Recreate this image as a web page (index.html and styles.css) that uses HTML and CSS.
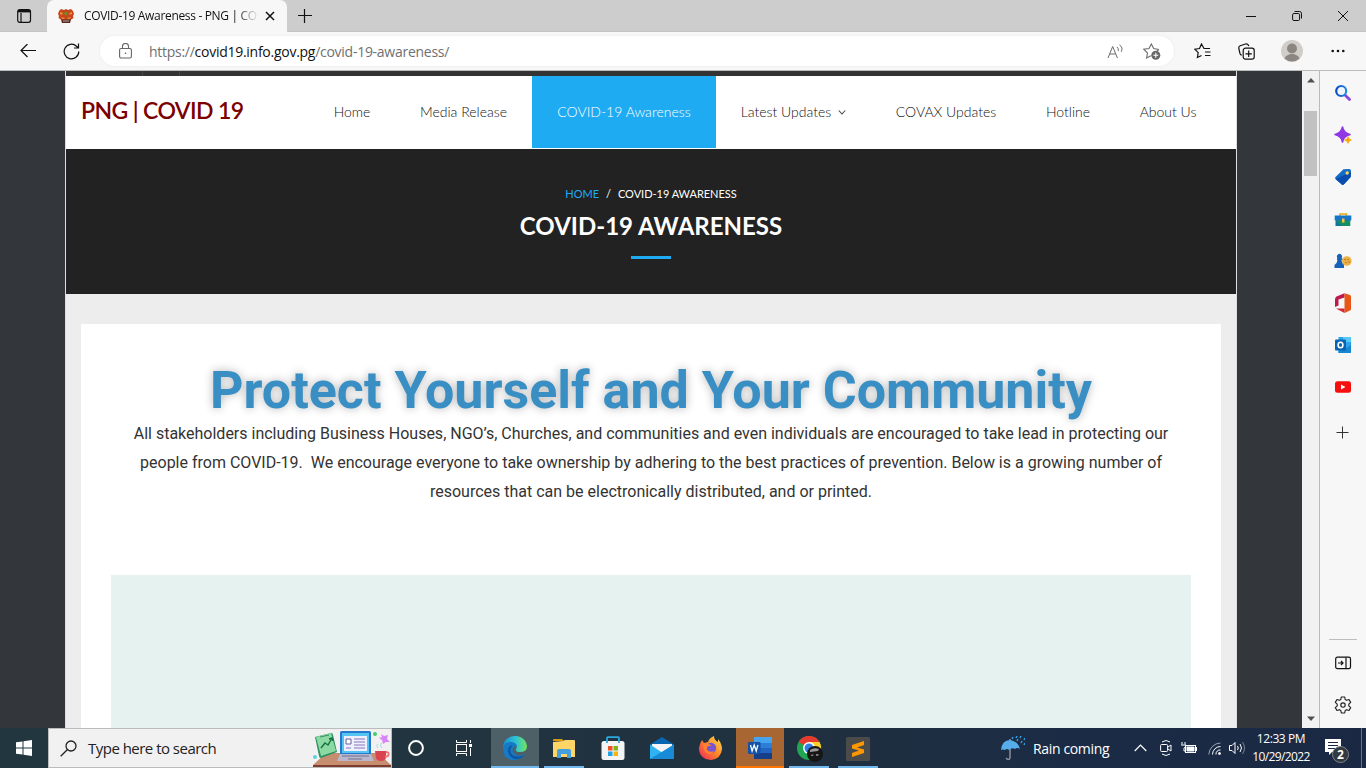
FILE: index.html
```html
<!DOCTYPE html>
<html lang="en">
<head>
<meta charset="utf-8">
<title>COVID-19 Awareness - PNG | COVID 19</title>
<link rel="stylesheet" href="styles.css">
</head>
<body>
<div class="desktop">
  <header class="tabbar">
    <svg class="tab-actions" width="16" height="16" viewBox="0 0 16 16" fill="none" stroke="#111"><rect x="1.700" y="1.700" width="12.800" height="12.600" rx="2" stroke-width="1.200"/><path d="M2 3.200h12" stroke-width="2.400"/><path d="M5 5v9" stroke-width="1.200"/></svg>
    <div class="tab">
      <svg width="18" height="16" viewBox="0 0 18 16"><path d="M2 3l2-2 3 1 2-1 2 1 3-1 2 2 1 3-1 2 .5 2-3 2H4.500l-3-2L2 8 1 6z" fill="#c5471b"/><path d="M3 4l3 1-1 2-2-1zm12 0-3 1 1 2 2-1zM4 9l4 1-2 1.500zm10 0-4 1 2 1.500z" fill="#ed8b42"/><path d="M4 11.500h10L13 15H5z" fill="#5b2a1c"/><circle cx="9" cy="5.500" r="1.800" fill="#6c8b2b"/><path d="M6 13h6" stroke="#aaa"/></svg>
      <span class="tab-title">COVID-19 Awareness - PNG | CO</span>
      <svg class="tab-close" width="10" height="10" viewBox="0 0 10 10" stroke="#111" stroke-width="1.500"><path d="M1 1l8 8M9 1l-8 8"/></svg>
    </div>
    <svg class="new-tab" width="14" height="14" viewBox="0 0 14 14" stroke="#111" stroke-width="1.200"><path d="M6.500 0v14M0 6.500h14"/></svg>
    <div class="window-buttons">
      <svg width="10" height="10" viewBox="0 0 10 10" stroke="#111" fill="none"><path d="M0 5.500h10"/></svg>
      <svg width="10" height="10" viewBox="0 0 10 10" stroke="#111" fill="none"><rect x=".6" y="2.500" width="7" height="7" rx="1.300"/><path d="M2.500 .5h5a2 2 0 0 1 2 2v5"/></svg>
      <svg width="10" height="10" viewBox="0 0 10 10" stroke="#111" fill="none"><path d="M0 0l10 10M10 0L0 10"/></svg>
    </div>
  </header>

  <div class="toolbar">
    <svg class="back" width="16" height="14" viewBox="0 0 16 14" fill="none" stroke="#111" stroke-width="1.200"><path d="M16 6.500H1M7.500 0L1 6.500 7.500 13"/></svg>
    <svg class="reload" width="17" height="17" viewBox="0 0 17 17" fill="none" stroke="#111" stroke-width="1.200"><path d="M15.800 8.500A7.300 7.300 0 1 1 13.500 3.200L15.500 5M15.500 .5V5H11"/></svg>
    <div class="address">
      <svg class="lock" width="13" height="16" viewBox="0 0 13 16" fill="none" stroke="#666" stroke-width="1.100"><rect x=".6" y="5.500" width="11.800" height="9.500" rx="1.500"/><path d="M3.500 5.500v-2a3 3 0 0 1 6 0v2"/><circle cx="6.500" cy="10.300" r=".8" fill="#555" stroke="none"/></svg>
      <span class="url">https://<b>covid19.info.gov.pg</b>/covid-19-awareness/</span>
      <svg class="read" width="17" height="15" viewBox="0 0 17 15" fill="none" stroke="#6b6b6b"><path d="M1 14L5.700 2.500 10.400 14M2.700 10h6M10 3q2 1.500 1.200 4M12.500 .8q4 3 1.700 7"/></svg>
      <svg class="addfav" width="18" height="17" viewBox="0 0 18 17" fill="none" stroke="#6b6b6b" stroke-width="1.100"><path d="M16 6.500L10.700 5.500 8.300 1 6 5.500.8 6.300 4.500 10l-.9 5 4.200-2.200M16 6.500L14 8"/><circle cx="12.800" cy="12.200" r="4.500" fill="#666" stroke="none"/><path d="M12.800 9.700v5M10.300 12.200h5" stroke="#fff"/></svg>
    </div>
    <svg class="favorites" width="17" height="16" viewBox="0 0 17 16" fill="none" stroke="#111" stroke-width="1.200"><path d="M16 5.500h-6L7.500 1 5.500 5.500.8 6.200l3.400 3.400-.8 4.900L7.500 12.500M11 9h5.500M11 12.500h5.500"/></svg>
    <svg class="collections" width="17" height="17" viewBox="0 0 17 17" fill="none" stroke="#111" stroke-width="1.200"><path d="M3.800 12.200Q2.500 12 2 10.500L.8 5.500Q.5 3.500 2.200 2.800L7.500 1Q10 .3 10.800 3.200"/><rect x="5.200" y="5.200" width="11" height="11" rx="2.200"/><path d="M10.700 7.600v6.400M7.500 10.800h6.400"/></svg>
    <svg class="profile" width="22" height="22" viewBox="0 0 22 22"><circle cx="11" cy="11" r="11" fill="#d1cec9"/><circle cx="11" cy="8.500" r="5" fill="#8c8682"/><path d="M3.500 18.500q2-4.500 7.500-4.500t7.500 4.500A11 11 0 0 1 3.500 18.500z" fill="#8c8682"/></svg>
    <svg class="more" width="14" height="4" viewBox="0 0 14 4" fill="#111"><circle cx="1.700" cy="2" r="1.300"/><circle cx="7" cy="2" r="1.300"/><circle cx="12.300" cy="2" r="1.300"/></svg>
  </div>

  <div class="content">
    <main class="viewport">
      <div class="site">
        <div class="topstrip"><i></i><i></i></div>
        <nav class="nav">
          <a class="brand">PNG | COVID 19</a>
          <a class="item home">Home</a>
          <a class="item media">Media Release</a>
          <a class="item active">COVID-19 Awareness</a>
          <a class="item latest">Latest Updates <svg width="8" height="6" viewBox="0 0 8 6" fill="none" stroke="#444" stroke-width="1.100"><path d="M.8 1.500L4 5 7.200 1.500"/></svg></a>
          <a class="item covax">COVAX Updates</a>
          <a class="item hotline">Hotline</a>
          <a class="item about">About Us</a>
        </nav>
        <section class="hero">
          <div class="crumbs"><a>HOME</a><span>/</span>COVID-19 AWARENESS</div>
          <h1>COVID-19 AWARENESS</h1>
          <div class="rule"></div>
        </section>
        <section class="body">
          <article class="card">
            <h2>Protect Yourself and Your Community</h2>
            <p>All stakeholders including Business Houses, NGO’s, Churches, and communities and even individuals are encouraged to take lead in protecting our<br>people from COVID-19.&nbsp; We encourage everyone to take ownership by adhering to the best practices of prevention. Below is a growing number of<br>resources that can be electronically distributed, and or printed.</p>
            <div class="panel"></div>
          </article>
        </section>
      </div>
    </main>
    <div class="scrollbar">
      <svg width="8" height="5" viewBox="0 0 8 5"><path d="M4 0l4 4.500H0z" fill="#505050"/></svg>
      <div class="thumb"></div>
      <svg class="down" width="8" height="5" viewBox="0 0 8 5"><path d="M0 .5h8L4 5z" fill="#505050"/></svg>
    </div>
    <aside class="sidebar">
      <svg viewBox="0 0 16 16"><defs><linearGradient id="lens"><stop stop-color="#0a4bc0"/><stop offset="1" stop-color="#2488e8"/></linearGradient></defs><path d="M10.500 10.500l4 4" stroke="#8846df" stroke-width="2.800" stroke-linecap="round"/><circle cx="6.200" cy="6" r="5" fill="#eef6ff" stroke="url(#lens)" stroke-width="2.200"/></svg>
      <svg viewBox="0 0 16 16"><path d="M7.500 0Q8.500 6 15 7.500 8.500 9 7.500 15 6.500 9 0 7.500 6.500 6 7.500 0z" fill="#9038e6" stroke="#9038e6" stroke-width="1.600" stroke-linejoin="round"/><path d="M13 9.500q.5 3 3.500 3.500-3 .5-3.500 3.500-.5-3-3.500-3.500 3-.5 3.500-3.500z" fill="#f5a70a" stroke="#f5a70a" stroke-width=".7"/></svg>
      <svg viewBox="0 0 16 16"><path d="M8.500 .3L14 0q2 0 2 2l-.3 6L9 15.300q-1.500 1.200-2.500 0L.5 10q-1-1 0-2z" fill="#126cc8"/><path d="M.5 10l6 5.300q1 1.200 2.500 0L15.700 8 16 3z" fill="#0a4daf"/><circle cx="12.200" cy="4" r="1.700" fill="#ffd45c"/></svg>
      <svg viewBox="0 0 16 16"><path d="M5 5V3h6.500v2" fill="none" stroke="#e9a51c" stroke-width="1.500"/><path d="M.7 8h14.600v7H.7z" fill="#149064"/><path d="M-.3 4.500h16.600v5H-.3z" fill="#1774c6"/><path d="M.7 10v5h7z" fill="#12769b"/><rect x="7" y="7.500" width="2.500" height="4" fill="#fac43d"/></svg>
      <svg viewBox="0 0 16 16"><circle cx="11.800" cy="8" r="4.800" fill="#efb044"/><g fill="#ac711d"><circle cx="10" cy="6.500" r=".8"/><circle cx="13" cy="6.500" r=".8"/><circle cx="11" cy="9.500" r=".8"/><circle cx="14" cy="9" r=".8"/></g><path d="M4.500 .8a2.700 2.700 0 0 1 2 4.400h.8v1.500l-.8.3q0 3 2.500 5v3H-.5v-3q2.800-2 3-5L2 6.700V5.200h.5A2.700 2.700 0 0 1 4.500 .8z" fill="#1761b6"/></svg>
      <svg class="office" viewBox="0 0 16 18"><path d="M9.500 -.8L1.500 2.500Q0 3.500 0 5.500v7.500l3.500-1.500V5.500L9.500 3.500z" fill="#bd194b"/><path d="M9.500 -.8L15 1q1 .5 1 2v12q0 1.200-1 1.600L9.500 19V-.8z" fill="#e85618"/><path d="M1 14.500h8.500V19z" fill="#d52735"/></svg>
      <svg viewBox="0 0 16 16"><path d="M3.500 0h11.500q1 0 1 1v15H3.500z" fill="#2aa5e9"/><path d="M8 0h8v5H8z" fill="#55c8f5"/><path d="M3.500 16h12.500V8l-6 4-6.500 1z" fill="#1687d3"/><rect y="2.500" width="11" height="11" rx="1" fill="#0965b4"/><ellipse cx="5.500" cy="8" rx="2.400" ry="2.700" fill="none" stroke="#fff" stroke-width="1.600"/></svg>
      <svg viewBox="0 0 16 16"><rect y="2.300" width="16" height="11.500" rx="2.500" fill="#f50f0f"/><path d="M6 5.500l4.500 2.500L6 10.500z" fill="#fff"/></svg>
      <svg class="plus" viewBox="0 0 16 16" fill="none" stroke="#333"><path d="M7.500 1.500v12M1.500 7.500h12"/></svg>
      <div class="divider"></div>
      <svg class="hide-bar" viewBox="0 0 16 16" fill="none" stroke="#111" stroke-width="1.200"><rect x=".7" y="2.200" width="14.800" height="11.400" rx="1.700"/><path d="M11 2.500V13.500M3 8h5M6 6l2 2-2 2"/></svg>
      <svg class="settings" viewBox="0 0 16 16" fill="none" stroke="#222" stroke-width="1.150"><path d="M6.300 0h3.400l.5 2.500 1.400.8 2.400-.8 1.700 2.900-1.900 1.700v1.800l1.900 1.700-1.700 2.900-2.400-.8-1.400.8-.5 2.500H6.300l-.5-2.500-1.400-.8-2.400.8L.3 10.600l1.900-1.700V7.100L.3 5.400 2 2.500l2.400.8 1.400-.8z" stroke-linejoin="round"/><circle cx="8" cy="8" r="2.200"/></svg>
    </aside>
  </div>

  <footer class="taskbar">
    <div class="start"><svg width="16" height="16" viewBox="0 0 16 16" fill="#fff"><path d="M0 2.300L6.500 1.400V7.500H0zM7.500 1.200L16 0V7.500H7.500zM0 8.500H6.500V14.600L0 13.700zM7.500 8.500H16V16L7.500 14.800z"/></svg></div>
    <div class="search">
      <svg class="glass" width="17" height="17" viewBox="0 0 17 17" fill="none" stroke="#222" stroke-width="1.300"><circle cx="11" cy="6" r="5"/><path d="M7.500 9.500L.7 16.300"/></svg>
      <span>Type here to search</span>
      <svg class="art" width="78" height="38" viewBox="0 0 78 38"><path d="M0 36l13-12h52l13 12v2H0z" fill="#c68d6f"/><path d="M0 36h78v2H0z" fill="#7d3c2d"/><path d="M2 8l16-4q2 0 2 2l4 17L8 29q-2 0-2-2z" fill="#2e9163"/><path d="M3 8l15-4 5 18-15 5z" fill="#8cd9a4"/><path d="M8 19l4-5 3 2 4-7m-3 1 3-1 1 3" fill="none" stroke="#187544" stroke-width="1.500"/><path d="M7 8l9-2" stroke="#378c60"/><rect x="27" y="2" width="31" height="24" rx="1.500" fill="#2279cf"/><path d="M29 4h27v20H29z" fill="#55c4f3"/><path d="M31 7h23v15H31z" fill="#edf0ff"/><path d="M33 10h5v5h-5z" fill="#fff" stroke="#665e9a"/><path d="M41 10h11M41 13h11M41 16h11M33 19h5M41 19h11" stroke="#8a77b9"/><path d="M27 25h31l3 7H24z" fill="#b9b6ce"/><path d="M29 27h27M35 30h14" stroke="#716e8c" stroke-width="1.200"/><path d="M62 22h11v7q-1 3-5 3t-5-3z" fill="#da4450"/><path d="M73 23q4 0 2 4l-3 1" fill="none" stroke="#ed7777" stroke-width="2"/><path d="M65 19q-3-3 0-4m4 4q-3-4 0-5" fill="none" stroke="#a7d7ec"/><path d="M68 5l3 2 4-1-1 4 3 3-4 0-3 2-1-4-3-2 3-1z" fill="#d985fa"/><circle cx="62" cy="5" r="2" fill="#45cb72"/><circle cx="2" cy="28" r="2" fill="#5cd2dc"/></svg>
    </div>
    <div class="tasks">
      <div class="task cortana"><svg width="16" height="16" viewBox="0 0 16 16"><circle cx="8" cy="8" r="6.900" fill="none" stroke="#fff" stroke-width="2"/></svg></div>
      <div class="task"><svg width="17" height="16" viewBox="0 0 17 16" fill="none" stroke="#fff"><path d="M.5 0v2.500h10V0M.5 16v-2.500h10V16"/><rect x=".5" y="4.500" width="10" height="7"/><path d="M14.500 0v3M14.500 8v8"/><rect x="13.500" y="4.500" width="2" height="2" fill="#fff"/></svg></div>
      <div class="task app edge"><svg width="24" height="24" viewBox="0 0 24 24"><defs><linearGradient id="edge-top"><stop stop-color="#168fd6"/><stop offset=".55" stop-color="#30c4d1"/><stop offset="1" stop-color="#72e35c"/></linearGradient></defs><path d="M0 11C1-3 22-4 24 10q0 6-7 6-5 0-4-3 2-4-2-6Q5 5 0 11z" fill="url(#edge-top)"/><path d="M0 12q1-6 7-6 6 0 7 4-6 1-4 6 3 6 12 2-4 6-11 6Q0 24 0 12z" fill="#167ac7"/><path d="M10 9q-4 3-2 8 3 6 14 2l-1 1q-6 6-13 1-5-5-2-10 2-2 4-2z" fill="#0c58a4"/></svg></div>
      <div class="task app open"><svg width="22" height="19" viewBox="0 0 22 19"><path d="M0 1q0-1 1-1h8l2 2H0z" fill="#d69a0d"/><path d="M0 3L10 2l2-1h9q1 0 1 1v16H0z" fill="#ffd567"/><path d="M4 19v-7q0-2 2-2h10q2 0 2 2v7h-4v-4H8v4z" fill="#439fdd"/></svg></div>
      <div class="task app"><svg width="24" height="24" viewBox="0 0 24 24"><rect x=".5" y="5" width="23" height="19" rx="2.500" fill="#f4f4f4"/><path d="M6 7V2q0-.8.8-.8h10.400q.8 0 .8.800V7" fill="none" stroke="#29aadf" stroke-width="1.800"/><path d="M7 10h4.500v4.500H7z" fill="#ef5125"/><path d="M12.500 10H17v4.500h-4.500z" fill="#7eb816"/><path d="M7 15.500h4.500V20H7z" fill="#20a4e7"/><path d="M12.500 15.500H17V20h-4.500z" fill="#f5b60c"/></svg></div>
      <div class="task app"><svg width="24" height="22" viewBox="0 0 24 22"><path d="M0 7.500L12 0l12 7.500V20H0z" fill="#0966b0"/><path d="M2 7h20v9H2z" fill="#f3f5f7"/><path d="M0 7.500l12 8 12-8V22H0z" fill="#2fb3f1"/><path d="M0 22L24 7.500V22z" fill="#178bd7"/></svg></div>
      <div class="task app"><svg width="24" height="24" viewBox="0 0 24 24"><defs><linearGradient id="fox" x1="1" y1="0" x2="0" y2="1"><stop stop-color="#ffe84a"/><stop offset=".5" stop-color="#ff8129"/><stop offset="1" stop-color="#ec2265"/></linearGradient></defs><path d="M1 8l2-4 2 3 4-1q1-4 6-6 0 4 4 6V3q4 5 4 10-1 10-11 11Q0 23 0 12z" fill="url(#fox)"/><circle cx="12" cy="12" r="5.200" fill="#7954cf"/><path d="M4 9q5-3 9 1-6-1-5 4 3 3 7 1-3 6-9 1z" fill="#ff812d"/></svg></div>
      <div class="task app word"><svg width="24" height="22" viewBox="0 0 24 22"><path d="M6 0h18v22H6z" fill="#2164c3"/><path d="M6 0h18v6H6z" fill="#45a4ed"/><path d="M6 6h18v5H6z" fill="#2d7ed7"/><path d="M6 16h18v6H6z" fill="#163f88"/><rect y="5" width="12.500" height="12" rx="1" fill="#1452a7"/><path d="M2.500 8l1.600 6L6.200 8l2 6 1.700-6" fill="none" stroke="#fff" stroke-width="1.300"/></svg></div>
      <div class="task app open chrome"><svg width="26" height="26" viewBox="0 0 26 26"><circle cx="12" cy="12" r="12" fill="#20a553"/><path d="M12 12L1.600 6A12 12 0 0 1 22.500 6z" fill="#e63a2e"/><path d="M12 6h10.500A12 12 0 0 1 12 24l5-9z" fill="#ffce2c"/><circle cx="12" cy="12" r="6" fill="#fff"/><circle cx="12" cy="12" r="4.500" fill="#327ee9"/><circle cx="18" cy="18" r="8" fill="#161616"/><path d="M13 14q4-3 9-1l-1 2-8 1z" fill="#999"/><path d="M14 18.500h3l-1 1.500h-2zm5-.5h3l-1 2h-2z" fill="#777"/></svg></div>
      <div class="task app open"><svg width="24" height="24" viewBox="0 0 24 24"><rect width="24" height="24" rx="1.500" fill="#4b4b4b"/><path d="M6 8l12-4v4l-7 2.500 7 2V16L6 20v-4l7-2.500-7-2z" fill="#ff9800"/></svg></div>
    </div>
    <div class="weather"><svg width="24" height="24" viewBox="0 0 24 24"><path d="M9 3v19q-1 3-4 0" fill="none" stroke="#8c8f98" stroke-width="1.500"/><path d="M0 14Q1 4 9 4q9 2 10 9-3-2-5 0-3-2-6 1-2-2-4 0-2-1-4 0z" fill="#57adeb"/><path d="M12 1l-1 2m5-3-1 2m5-2-1 2m5 0-1 2m-6-1-1 2m5 0-1 2m4 0-1 2" stroke="#339de6" stroke-width="1.500"/></svg><span>Rain coming</span></div>
    <div class="tray">
      <svg class="chevron" width="13" height="8" viewBox="0 0 13 8" fill="none" stroke="#fff" stroke-width="1.200"><path d="M.7 7L6.500 1.200 12.300 7"/></svg>
      <svg class="meet" width="12" height="16" viewBox="0 0 12 16" fill="none" stroke="#fff"><rect x=".6" y="4.500" width="7" height="7" rx="1"/><path d="M8 7l3-2v6L8 9M2 2q4-3 8 0M2 14q4 3 8 0"/></svg>
      <svg class="battery" width="16" height="12" viewBox="0 0 16 12" fill="none" stroke="#fff"><rect x="4.500" y="3.500" width="10" height="7"/><path d="M15.500 5v4M1 0v2.500M4 0v2.500M0 3h5v1.500L3 6v3h2"/><path d="M6 5h7v4H6z" fill="#fff"/></svg>
      <svg class="wifi" width="13" height="13" viewBox="0 0 13 13" fill="none" stroke="#fff"><path d="M8 12.500A4 4 0 0 1 12.500 8M4.500 12.500a8 8 0 0 1 8-8"/><path d="M.8 12.500A12 12 0 0 1 12.500 1" stroke="#9ba4b5"/><circle cx="11.500" cy="11.500" r="1" fill="#fff"/></svg>
      <svg class="speaker" width="17" height="14" viewBox="0 0 17 14" fill="none" stroke="#fff"><path d="M.5 4.500H3l3-3v11l-3-3H.5zM8.500 5q1.500 2 0 4M11 3q3 4 0 8"/><path d="M13.500 1q4 6 0 12" stroke="#78849a"/></svg>
      <div class="clock"><span class="time">12:33 PM</span><span class="date">10/29/2022</span></div>
      <div class="notify"><svg width="16" height="16" viewBox="0 0 16 16"><path d="M0 0h16v13H7l-3 3v-3H0z" fill="#fff"/><path d="M3 3.500h10M3 6.500h10M3 9.500h7" stroke="#1b2944"/></svg><b class="badge">2</b></div>
      <i class="peek"></i>
    </div>
  </footer>
</div>
</body>
</html>
```
FILE: styles.css
```css
* { box-sizing: border-box; }
body { margin: 0; font-family: "Open Sans", "Noto Sans", sans-serif; overflow: hidden; }
svg { display: block; flex: none; }
.desktop { width: 1366px; height: 768px; display: flex; flex-direction: column; overflow: hidden; }

/* Browser frame */
.tabbar { height: 32px; flex: none; display: flex; background: #cdcdcd; border-bottom: 1px solid #c4c4c4; }
.tab-actions { margin: 8px 6px 0 16px; }
.tab { width: 240px; height: 32px; margin-left: 9px; padding: 0 11px 1px 10px; display: flex; align-items: center; background: #f7f7f7; border-radius: 7px 7px 0 0; }
.tab-title { width: 175px; margin-left: 9px; font-size: 12px; letter-spacing: -.33px; white-space: nowrap; overflow: hidden; background: linear-gradient(90deg, #111 154px, #aaa 166px, #eee 175px); background-clip: text; -webkit-background-clip: text; color: transparent; }
.tab-close { margin-left: 6px; }
.new-tab { margin: 9px 0 0 11px; }
.window-buttons { margin: 11px 18px 0 auto; display: flex; gap: 36px; }
.toolbar { height: 38px; flex: none; display: flex; align-items: center; background: #f7f7f7; }
.back { margin-left: 20px; }
.reload { margin-left: 27px; }
.address { width: 1074px; height: 30px; margin-left: 20px; display: flex; align-items: center; background: #fff; border-radius: 15px; box-shadow: 0 0 3px #e9e9e9; }
.lock { margin-left: 19px; }
.url { margin-left: 17px; width: 301px; font-size: 14px; letter-spacing: -.27px; color: #707070; white-space: nowrap; }
.url b { font-weight: 400; color: #111; }
.read { margin-left: 657px; }
.addfav { margin-left: 19px; }
.favorites { margin-left: 20px; }
.collections { margin-left: 27px; }
.profile { margin-left: 26px; }
.more { margin-left: 28px; }
.content { height: 658px; flex: none; display: flex; border-top: 1px solid #b9bdbb; }

/* Website */
.viewport { width: 1302px; background: #33363b; overflow: hidden; }
.site { width: 1172px; height: 657px; margin-left: 65px; border: solid #ddd; border-width: 0 1px; background: #ededed; }
.topstrip { height: 5px; background: #333; display: flex; padding-left: 76px; gap: 36px; }
.topstrip i { width: 1px; background: #444; }
.nav { height: 73px; display: flex; background: #fff; font-family: Lato, sans-serif; }
.brand { width: 243px; padding: 0 0 5px 15px; display: flex; align-items: center; font-size: 23px; font-weight: 600; letter-spacing: -.62px; color: #7c0000; white-space: nowrap; }
.item { height: 72px; padding-bottom: 1px; display: flex; align-items: center; justify-content: center; font-size: 14px; font-weight: 300; color: #111; white-space: nowrap; }
.home { width: 86px; }
.media { width: 137px; }
.active { width: 184px; background: #1fabf2; color: #fff; }
.latest { width: 155px; gap: 7px; }
.covax { width: 150px; }
.hotline { width: 94px; }
.about { width: 106px; }
.hero { height: 145px; padding-top: 37px; background: #222; color: #fff; text-align: center; font-family: Lato, sans-serif; }
.crumbs { height: 16px; display: flex; justify-content: center; font-size: 11px; line-height: 16px; letter-spacing: -.03px; }
.crumbs a { color: #1fabf2; }
.crumbs span { margin: 0 7px; }
.hero h1 { margin: 8px 0 0; font-size: 24px; line-height: 32px; font-weight: 700; }
.rule { width: 40px; height: 3px; margin: 14px auto 0; background: #1fabf2; }
.body { padding: 30px 15px 0; font-family: Roboto, sans-serif; }
.card { height: 404px; padding: 38px 30px 0; background: #fff; text-align: center; }
.card h2 { margin: 0; font-size: 52px; line-height: 57px; font-weight: 700; color: #398fc4; text-shadow: 0 0 10px rgba(0, 0, 0, .3); white-space: nowrap; }
.card p { margin: 0; font-size: 16px; line-height: 29px; color: #333; white-space: nowrap; }
.panel { height: 153px; margin-top: 69px; background: #e6f2f0; }

/* Browser rails */
.scrollbar { width: 17px; padding: 7px 2px 7px; display: flex; flex-direction: column; align-items: center; background: #f1f1f1; }
.thumb { width: 13px; height: 65px; margin-top: 28px; background: #c1c1c1; }
.down { margin-top: auto; }
.sidebar { width: 47px; padding: 14px 0; display: flex; flex-direction: column; align-items: center; gap: 26px; background: #f7f7f7; border-left: 1px solid #bbb; }
.sidebar svg { width: 16px; height: 16px; overflow: visible; }
.sidebar .office { width: 18px; height: 18px; margin: -1px 0; }
.plus { margin-top: 4px; }
.divider { width: 28px; height: 1px; flex: none; margin: 172px 0 -11px; background: #bdbdbd; }

/* Windows taskbar */
.taskbar { height: 40px; flex: none; display: flex; background: linear-gradient(90deg, #21363e 0, #213540 400px, #20303f 800px, #1b2b45 1080px, #1a2844 1366px); color: #fff; }
.start { width: 48px; display: flex; align-items: center; justify-content: center; }
.search { width: 344px; display: flex; align-items: center; background: #f1f1f1; border: 1px solid #bbb; color: #222; font-size: 15px; letter-spacing: -.52px; }
.glass { margin-left: 11px; }
.search span { width: 130px; margin-left: 11px; white-space: nowrap; }
.art { margin-left: auto; }
.tasks { display: flex; width: 488px; }
.task { width: 48px; height: 40px; display: flex; flex: none; align-items: center; justify-content: center; }
.app { margin-right: 1px; }
.edge { margin-left: 3px; background: #4d6068; border-bottom: 2px solid #71b8ef; padding-top: 2px; }
.open { padding: 1px 4px 0; background: linear-gradient(#71b8ef, #71b8ef) 4px 38px / 40px 2px no-repeat; }
.chrome { padding-left: 6px; }
.word { background: #a86633; border-bottom: 2px solid #ff7500; padding-top: 1px; }
.weather { width: 240px; padding-left: 121px; display: flex; align-items: center; gap: 8px; font-size: 14px; letter-spacing: -.35px; white-space: nowrap; }
.tray { width: 246px; display: flex; align-items: center; }
.chevron { margin-left: 14px; }
.meet { margin-left: 13px; }
.battery { margin-left: 9px; }
.wifi { margin-left: 11px; }
.speaker { margin-left: 8px; }
.clock { width: 66px; margin-left: 2px; display: flex; flex-direction: column; align-items: center; font-size: 12px; line-height: 18px; letter-spacing: -.6px; white-space: nowrap; }
.time { letter-spacing: -.4px; }
.notify { position: relative; width: 25px; height: 24px; margin-left: 11px; padding-top: 3px; }
.badge { position: absolute; left: 7px; top: 10px; width: 17px; height: 17px; border: 1px solid #81858a; border-radius: 50%; background: #333941; font-size: 12px; line-height: 15px; text-align: center; }
.peek { width: 1px; height: 40px; margin-left: auto; margin-right: 4px; background: #697386; }
```
